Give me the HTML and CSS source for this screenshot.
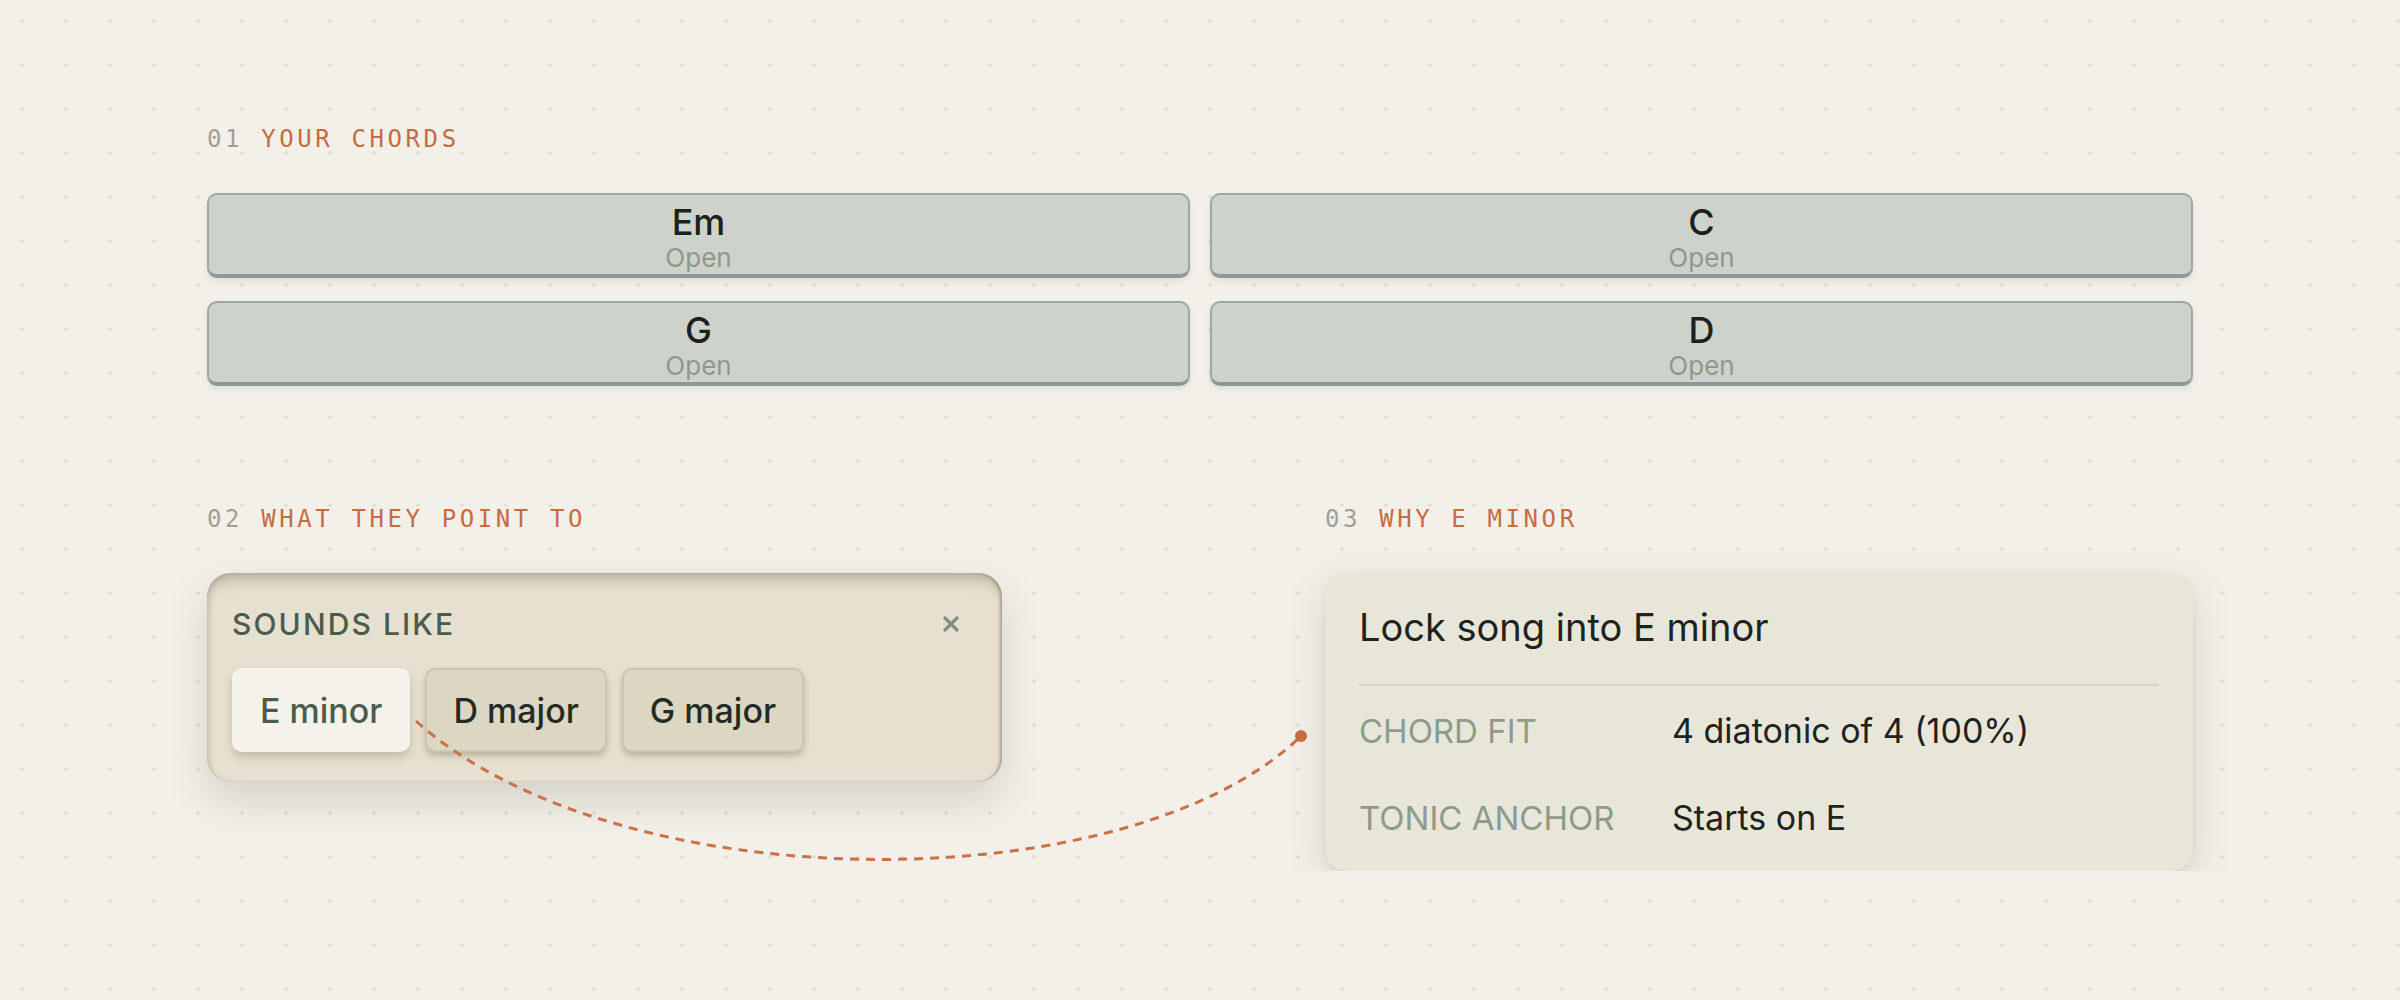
FILE: index.html
```html
<!DOCTYPE html>
<html lang="en">
<head>
    <meta charset="UTF-8">
    <meta name="viewport" content="width=device-width, initial-scale=1.0">
    <title>Key Finder</title>
    <link rel="stylesheet" href="styles.css">
</head>
<body>
    <div class="board">
        <section class="step">
            <h2 class="step-label"><span class="step-num">01</span> Your chords</h2>
            <div class="chord-grid">
                <button class="chord"><span class="chord-name">Em</span><span class="chord-voicing">Open</span></button>
                <button class="chord"><span class="chord-name">C</span><span class="chord-voicing">Open</span></button>
                <button class="chord"><span class="chord-name">G</span><span class="chord-voicing">Open</span></button>
                <button class="chord"><span class="chord-name">D</span><span class="chord-voicing">Open</span></button>
            </div>
        </section>

        <div class="step-row">
            <section class="step">
                <h2 class="step-label"><span class="step-num">02</span> What they point to</h2>
                <div class="sounds">
                    <div class="sounds-head">
                        <span class="sounds-title">SOUNDS LIKE</span>
                        <button class="close" aria-label="Close">
                            <svg viewBox="0 0 18 18" width="18" height="18">
                                <path d="M2 2 L16 16 M16 2 L2 16" stroke="#80927f" stroke-width="3.2" stroke-linecap="butt" fill="none"/>
                            </svg>
                        </button>
                    </div>
                    <div class="key-list">
                        <button class="key is-active">E minor</button>
                        <button class="key">D major</button>
                        <button class="key">G major</button>
                    </div>
                </div>
            </section>

            <section class="step">
                <h2 class="step-label"><span class="step-num">03</span> Why E minor</h2>
                <div class="reason">
                    <h3 class="reason-title">Lock song into E minor</h3>
                    <hr class="reason-rule">
                    <dl class="reason-facts">
                        <dt>CHORD FIT</dt>
                        <dd>4 diatonic of 4 (100%)</dd>
                        <dt>TONIC ANCHOR</dt>
                        <dd>Starts on E</dd>
                    </dl>
                </div>
            </section>
        </div>

        <!-- connector from the picked key to its explanation -->
        <svg class="link-line" viewBox="0 0 1986 1000" width="1986" height="1000">
            <path d="M209 721 C411 903 922 903 1094 736" fill="none" stroke="#cc7048" stroke-width="3" stroke-dasharray="9 7"/>
            <circle cx="1094" cy="736" r="6" fill="#c96c44"/>
        </svg>
    </div>
</body>
</html>
```

FILE: styles.css
```css
/* Page */
body {
    margin: 0;
    background-color: #f2f0e8;
    background-image: radial-gradient(circle, #e2dfd5 1.6px, transparent 2.2px);
    background-size: 44px 44px;
    background-position: 0 -1px;
    font-family: Inter, "Noto Sans", sans-serif;
    color: #1e231d;
}

.board {
    position: relative;
    width: 1986px;
    margin: 0 auto;
    padding-top: 124px;
}

/* Step labels */
.step-label {
    margin: 0 0 39px;
    font-family: "DejaVu Sans Mono", monospace;
    font-size: 24px;
    line-height: 30px;
    font-weight: 400;
    letter-spacing: 0.15em;
    text-transform: uppercase;
    color: #c86a42;
}

.step-num {
    color: #a19f97;
}

/* Chords */
.chord-grid {
    display: grid;
    grid-template-columns: 1fr 1fr;
    gap: 23px 20px;
}

.chord {
    display: flex;
    flex-direction: column;
    align-items: center;
    padding: 6px 0 1px;
    background: #cdd3ca;
    border: 2px solid #9ca7a7;
    border-bottom: 4px solid #8d9898;
    border-radius: 10px;
    box-shadow: 0 3px 6px rgba(60, 70, 60, 0.1);
    font-family: inherit;
    cursor: pointer;
}

.chord-name {
    font-size: 36px;
    line-height: 42px;
    font-weight: 500;
    color: #1c211d;
}

.chord-voicing {
    font-size: 26px;
    line-height: 30px;
    color: #8e998c;
}

/* Second row */
.step-row {
    display: grid;
    grid-template-columns: 1fr 1fr;
    column-gap: 250px;
    margin-top: 118px;
}

/* Sounds like */
.sounds {
    width: 795px;
    box-sizing: border-box;
    padding: 34px 42px 30px 25px;
    background: #e6e0d1;
    border-radius: 24px;
    box-shadow:
        inset 0 16px 16px -12px rgba(80, 70, 45, 0.4),
        inset 5px 0 6px -4px rgba(80, 70, 45, 0.28),
        inset -3px 0 3px -1px rgba(80, 70, 45, 0.4),
        0 18px 40px rgba(70, 70, 50, 0.18);
}

.sounds-head {
    display: flex;
    justify-content: space-between;
    align-items: center;
    margin-bottom: 27px;
}

.sounds-title {
    font-size: 30px;
    line-height: 34px;
    font-weight: 500;
    letter-spacing: 0.07em;
    color: #4b5b4c;
}

.close {
    display: flex;
    padding: 0;
    border: none;
    background: none;
    cursor: pointer;
}

.key-list {
    display: flex;
    gap: 15px;
}

.key {
    height: 84px;
    padding: 0 26px;
    font-family: inherit;
    font-size: 34px;
    font-weight: 500;
    color: #252a24;
    background: #dbd7c2;
    border: 2px solid #cbc6af;
    border-radius: 10px;
    box-shadow: 0 4px 6px rgba(90, 80, 55, 0.3);
    cursor: pointer;
}

.key.is-active {
    background: #f4f2ea;
    border-color: #f4f2ea;
    color: #4b5c4e;
    box-shadow: 0 5px 8px rgba(90, 80, 55, 0.25);
}

/* Why card */
.reason {
    padding: 32px 35px 33px 34px;
    background: #e8e6d9;
    border-radius: 22px;
    box-shadow: 0 12px 40px rgba(70, 70, 50, 0.16), 0 2px 6px rgba(70, 70, 50, 0.08);
}

.reason-title {
    margin: 0;
    font-size: 38px;
    line-height: 44px;
    font-weight: 400;
    color: #1e231d;
}

.reason-rule {
    height: 2px;
    margin: 35px 0 25px;
    border: 0;
    background: #d5d2c4;
}

.reason-facts {
    display: grid;
    grid-template-columns: 313px 1fr;
    row-gap: 47px;
    margin: 0;
}

.reason-facts dt {
    font-size: 33px;
    line-height: 40px;
    color: #8c9b8a;
}

.reason-facts dd {
    margin: 0;
    font-size: 34px;
    line-height: 40px;
    color: #1e231d;
}

/* Connector overlay */
.link-line {
    position: absolute;
    left: 0;
    top: 0;
    pointer-events: none;
    overflow: visible;
}
```
